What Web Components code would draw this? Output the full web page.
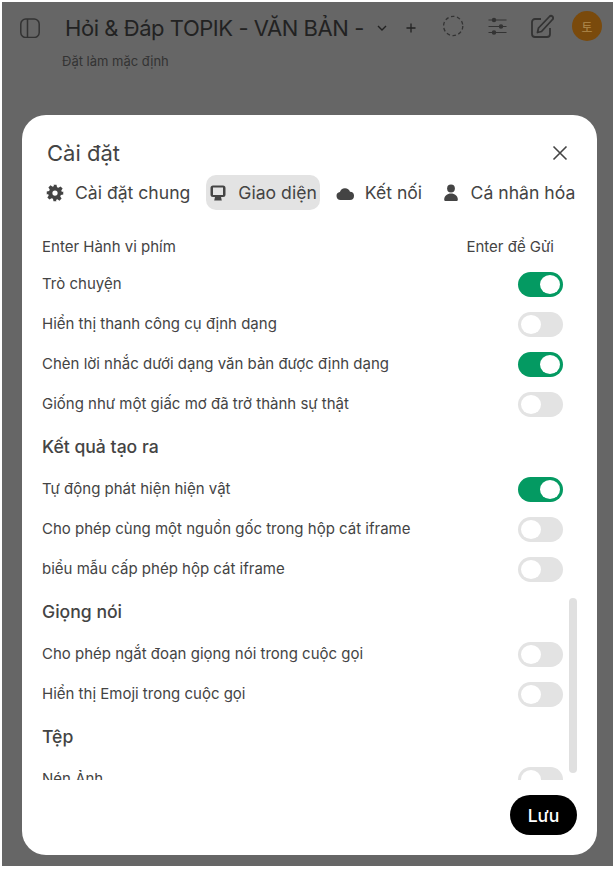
<!DOCTYPE html>
<html lang="vi">
<head>
<meta charset="utf-8">
<title>Cài đặt</title>
<style>
  html, body { margin: 0; height: 100%; background: #fff; }
  body { font-family: Inter, "Liberation Sans", sans-serif; overflow: hidden; }
</style>
</head>
<body>
<app-screen>
  <top-bar></top-bar>
  <settings-modal slot="modal">
    <setting-row label="Enter Hành vi phím" value="Enter để Gửi"></setting-row>
    <setting-row label="Trò chuyện" on></setting-row>
    <setting-row label="Hiển thị thanh công cụ định dạng" off></setting-row>
    <setting-row label="Chèn lời nhắc dưới dạng văn bản được định dạng" on></setting-row>
    <setting-row label="Giống như một giấc mơ đã trở thành sự thật" off></setting-row>
    <setting-heading>Kết quả tạo ra</setting-heading>
    <setting-row label="Tự động phát hiện hiện vật" on></setting-row>
    <setting-row label="Cho phép cùng một nguồn gốc trong hộp cát iframe" off></setting-row>
    <setting-row label="biểu mẫu cấp phép hộp cát iframe" off></setting-row>
    <setting-heading>Giọng nói</setting-heading>
    <setting-row label="Cho phép ngắt đoạn giọng nói trong cuộc gọi" off></setting-row>
    <setting-row label="Hiển thị Emoji trong cuộc gọi" off></setting-row>
    <setting-heading>Tệp</setting-heading>
    <setting-row label="Nén Ảnh" off></setting-row>
  </settings-modal>
</app-screen>

<script>
class AppScreen extends HTMLElement {
  constructor() {
    super();
    this.attachShadow({ mode: "open" });
  }
  connectedCallback() {
    this.shadowRoot.innerHTML = `
      <style>
        :host {
          display: block;
          position: relative;
          height: 869px;
          box-sizing: border-box;
          padding: 2px 3px 3px 2px;
        }
        .dim {
          height: 100%;
          background: #666;
        }
        .overlay {
          position: absolute;
          inset: 0;
          display: flex;
          padding: 115px 19px 14px 22px;
          box-sizing: border-box;
        }
      </style>
      <div class="dim"><slot></slot></div>
      <div class="overlay"><slot name="modal"></slot></div>
    `;
  }
}

class TopBar extends HTMLElement {
  constructor() {
    super();
    this.attachShadow({ mode: "open" });
  }
  connectedCallback() {
    this.shadowRoot.innerHTML = `
      <style>
        :host { display: block; color: #222; }
        .bar {
          display: flex;
          align-items: center;
          height: 48px;
          padding: 2px 11px 0 18px;
        }
        svg { display: block; flex: none; }
        .title {
          margin-left: 25px;
          font-size: 22px;
          letter-spacing: -0.45px;
          white-space: nowrap;
          color: #222;
        }
        .chev { margin-left: 12px; }
        .plus { margin-left: 17px; }
        .right {
          margin-left: auto;
          padding-bottom: 4px;
          display: flex;
          align-items: center;
        }
        .avatar {
          width: 30px;
          height: 30px;
          border-radius: 50%;
          background: #7a4a0c;
          color: #b08a50;
          font: 12px "Noto Sans CJK KR", sans-serif;
          display: flex;
          align-items: center;
          justify-content: center;
          margin-left: 18px;
        }
        .sub {
          margin: 1px 0 0 60px;
          font-size: 13px;
          line-height: 16px;
          color: #333;
        }
      </style>
      <div class="bar">
        <svg width="20" height="20" viewBox="0 0 20 20" fill="none" stroke="#333" stroke-width="1.5"><rect x=".8" y="1" width="18.4" height="18.500" rx="5"/><line x1="7.500" y1="1" x2="7.500" y2="19.500"/></svg>
        <span class="title">Hỏi &amp; Đáp TOPIK - VĂN BẢN -</span>
        <svg class="chev" width="12" height="12" viewBox="0 0 12 12" fill="none" stroke="#222" stroke-width="1.4"><path d="M2 4l4 4 4-4"/></svg>
        <svg class="plus" width="12" height="12" viewBox="0 0 12 12" fill="none" stroke="#222" stroke-width="1.3"><path d="M6 1.500v9M1.500 6h9"/></svg>
        <div class="right">
          <svg width="24" height="24" viewBox="0 0 24 24" fill="none" stroke="#333" stroke-width="1.3" stroke-dasharray="3.500 2.600"><circle cx="11.200" cy="12" r="9.600"/></svg>
          <svg style="margin-left:20px" width="24" height="24" viewBox="0 0 24 24" fill="none" stroke="#333" stroke-width="1.2"><path d="M2.500 6h18M2.500 12.500h18M2.500 18.500h18"/><circle cx="8" cy="6" r="1.600" fill="#333"/><circle cx="15" cy="12.500" r="1.600" fill="#333"/><circle cx="8" cy="18.500" r="1.600" fill="#333"/></svg>
          <svg style="margin-left:20px" width="24" height="24" viewBox="0 0 24 24" fill="none" stroke="#333" stroke-width="1.800" stroke-linejoin="round"><path d="M11 5H5a3 3 0 0 0-3 3v12a3 3 0 0 0 3 3h12a3 3 0 0 0 3-3v-6"/><path d="M7.500 18.500l1-4.500L19.500 2.500a2 2 0 0 1 3 3L11.500 17.500z"/></svg>
          <div class="avatar">토</div>
        </div>
      </div>
      <div class="sub">Đặt làm mặc định</div>
    `;
  }
}

class SettingsModal extends HTMLElement {
  constructor() {
    super();
    this.attachShadow({ mode: "open" });
  }
  connectedCallback() {
    this.shadowRoot.innerHTML = `
      <style>
        :host {
          display: flex;
          flex-direction: column;
          flex: 1;
          background: #fff;
          border-radius: 24px;
          color: #444;
          min-width: 0;
        }
        header {
          display: flex;
          align-items: center;
          justify-content: space-between;
          padding: 24px 29px 0 25px;
          height: 28px;
        }
        h2 {
          margin: 0;
          font-size: 22px;
          font-weight: 400;
          color: #444;
        }
        header svg { display: block; }
        nav {
          display: flex;
          align-items: center;
          gap: 16px;
          margin-top: 8px;
          padding-left: 24px;
          white-space: nowrap;
        }
        .tab {
          display: flex;
          align-items: center;
          gap: 11px;
          height: 35px;
          font-size: 17.6px;
          border-radius: 10px;
          color: #444;
        }
        .tab.active { background: #e3e3e3; padding: 0 3px 0 4px; gap: 12px; }
        .tab.last { margin-left: 3.500px; }
        .tab svg { display: block; flex: none; fill: #444; }
        .scroll {
          position: relative;
          margin-top: 17px;
          height: 553px;
          overflow: hidden;
          padding: 0 34px 0 20px;
        }
        .thumb {
          position: absolute;
          right: 20px;
          top: 371px;
          width: 8px;
          height: 175px;
          border-radius: 4px;
          background: #e0e0e0;
        }
        footer {
          display: flex;
          justify-content: flex-end;
          padding: 15px 20px 0 0;
        }
        button {
          width: 67px;
          height: 40px;
          border: 0;
          border-radius: 20px;
          background: #000;
          color: #fff;
          font: 500 17.6px Inter, "Liberation Sans", sans-serif;
        }
      </style>
      <header>
        <h2>Cài đặt</h2>
        <svg width="16" height="16" viewBox="0 0 16 16" fill="none" stroke="#444" stroke-width="1.600"><path d="M1.500 1.500l13 13M14.500 1.500l-13 13"/></svg>
      </header>
      <nav>
        <div class="tab">
          <svg width="18" height="18" viewBox="0 0 24 24"><path fill-rule="evenodd" d="M10 1h4l.7 3.200 1.900.8 2.800-1.800 2.800 2.800-1.800 2.800.8 1.900L23 10v4l-3.200.7-.8 1.900 1.800 2.800-2.800 2.800-2.800-1.800-1.900.8L14 23h-4l-.7-3.200-1.900-.8-2.800 1.800-2.800-2.800 1.800-2.800-.8-1.900L1 14v-4l3.200-.7.8-1.900-1.800-2.800 2.800-2.800 2.800 1.800 1.900-.8zM12 8.500a3.500 3.500 0 1 0 0 7 3.500 3.500 0 0 0 0-7z"/></svg>
          Cài đặt chung
        </div>
        <div class="tab active">
          <svg width="16" height="16" viewBox="0 0 16 16"><path fill-rule="evenodd" d="M3 .5h10A2.500 2.500 0 0 1 15.500 3v6.500a2.500 2.500 0 0 1-2.500 2.500H3A2.500 2.500 0 0 1 .5 9.500V3A2.500 2.500 0 0 1 3 .5zM3 2.500v7.500h10V2.500z"/><path d="M5 12h6l.8 3.500H4.200z"/></svg>
          Giao diện
        </div>
        <div class="tab">
          <svg width="18" height="18" viewBox="0 0 18 18"><path d="M4.500 16a4 4 0 0 1-.6-7.950A5.300 5.300 0 0 1 14 7.800 4.100 4.100 0 0 1 13.800 16z"/></svg>
          Kết nối
        </div>
        <div class="tab last">
          <svg width="18" height="18" viewBox="0 0 18 18"><circle cx="9" cy="4.500" r="3.900"/><path d="M2.200 15.500c0-3.500 3-6 6.800-6s6.800 2.500 6.800 6c0 1-.6 1.600-1.500 1.600H3.700c-.9 0-1.500-.6-1.500-1.600z"/></svg>
          Cá nhân hóa
        </div>
      </nav>
      <div class="scroll">
        <slot></slot>
        <div class="thumb"></div>
      </div>
      <footer><button>Lưu</button></footer>
    `;
  }
}

class SettingHeading extends HTMLElement {
  constructor() {
    super();
    this.attachShadow({ mode: "open" });
  }
  connectedCallback() {
    this.shadowRoot.innerHTML = `
      <style>
        :host {
          display: flex;
          align-items: center;
          height: 45px;
          font-size: 17.6px;
          font-weight: 450;
          color: #444;
        }
        span { margin-bottom: 2px; }
      </style>
      <span><slot></slot></span>
    `;
  }
}

class SettingRow extends HTMLElement {
  constructor() {
    super();
    this.attachShadow({ mode: "open" });
  }
  connectedCallback() {
    const label = this.getAttribute("label");
    const value = this.getAttribute("value");
    const on = this.hasAttribute("on");
    const off = this.hasAttribute("off");
    this.shadowRoot.innerHTML = `
      <style>
        :host {
          display: flex;
          align-items: center;
          justify-content: space-between;
          height: 40px;
          font-size: 15px;
          color: #444;
        }
        :host([value]) { height: 37.5px; padding-top: 2px; box-sizing: border-box; }
        :host(:not([value])) .label { margin-bottom: 2px; }
        .value { margin-right: 9px; }
        .sw {
          width: 45px;
          height: 25px;
          border-radius: 13px;
          box-sizing: border-box;
          padding: 3px;
          display: flex;
          background: #e3e3e3;
        }
        .sw.on { background: #049a62; justify-content: flex-end; }
        .sw i {
          display: block;
          width: 20px;
          height: 19px;
          border-radius: 50%;
          background: #fff;
        }
      </style>
      <span class="label">${label}</span>
      ${value ? `<span class="value">${value}</span>` : ""}
      ${on || off ? `<span class="sw ${on ? "on" : ""}"><i></i></span>` : ""}
    `;
  }
}

customElements.define("app-screen", AppScreen);
customElements.define("top-bar", TopBar);
customElements.define("settings-modal", SettingsModal);
customElements.define("setting-heading", SettingHeading);
customElements.define("setting-row", SettingRow);
</script>
</body>
</html>
